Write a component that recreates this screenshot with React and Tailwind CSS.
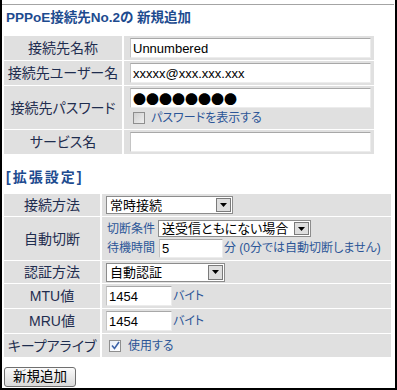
import React from 'react';

const FONT = "font-['Liberation_Sans','Noto_Sans_CJK_JP',sans-serif] [font-feature-settings:'palt']";

const TextBox = ({ value, w, h = 20, className = '' }) => (
  <div
    className={`flex items-center bg-white border border-t-[#a8a8a8] border-l-[#c4c4c4] border-r-[#ececec] border-b-[#ececec] pl-[2px] text-[13px] text-black leading-none ${className}`}
    style={{ width: w, height: h }}
  >
    {value}
  </div>
);

const SelectBox = ({ value, w, h = 18 }) => (
  <div
    className="flex items-stretch bg-white border border-[#8c8c8c] text-[13px] text-black leading-none"
    style={{ width: w, height: h }}
  >
    <div className="flex-1 flex items-center pl-[3px] whitespace-nowrap overflow-hidden">{value}</div>
    <div className="w-[15px] m-px flex items-center justify-center bg-[#dedede] border border-[#7a7a7a]">
      <svg width="7" height="4" viewBox="0 0 7 4">
        <path d="M0 0h7L3.5 4z" fill="#000" />
      </svg>
    </div>
  </div>
);

const CheckBox = ({ checked }) => (
  <span
    className={`w-[12px] h-[12px] border border-[#8e8e8e] flex items-center justify-center ${
      checked ? 'bg-gradient-to-br from-[#e8eef8] to-[#ffffff]' : 'bg-gradient-to-br from-[#d0d0d0] to-[#eeeeee]'
    }`}
  >
    {checked && (
      <svg width="9" height="9" viewBox="0 0 9 9">
        <path d="M1 4.5l2.5 3L8 1" stroke="#3d63a8" strokeWidth="1.6" fill="none" />
      </svg>
    )}
  </span>
);

const Label = ({ children, h }) => (
  <td className="bg-[#e0e0e0] text-center align-middle p-0 text-[14px] text-[#1f2d4f] leading-none" style={{ height: h }}>
    {children}
  </td>
);

export default function App() {
  return (
    <div className={`w-[397px] h-[390px] bg-white border-l-2 border-r-2 border-b-2 border-black overflow-hidden ${FONT}`}>
      <div className="mt-[4px] h-px bg-[#a4a4a4] mr-[1px]" />

      {/* Title */}
      <div className="h-[30px] pl-[4px] leading-[26px] text-[13.5px] font-bold text-[#1d4b8f]">
        PPPoE接続先No.2の 新規追加
      </div>

      {/* Basic settings */}
      <table className="w-[374px] border-separate border-spacing-x-[2px] border-spacing-y-px">
        <tbody>
          <tr>
            <Label h={24}>接続先名称</Label>
            <td className="bg-[#e0e0e0] p-0 pl-[6px] w-[250px]">
              <TextBox value="Unnumbered" w={241} className="text-[12.5px]" />
            </td>
          </tr>
          <tr>
            <Label h={24}>接続先ユーザー名</Label>
            <td className="bg-[#e0e0e0] p-0 pl-[6px]">
              <TextBox value="xxxxx@xxx.xxx.xxx" w={241} className="text-[12.5px]" />
            </td>
          </tr>
          <tr>
            <Label h={43}>接続先パスワード</Label>
            <td className="bg-[#e0e0e0] p-0 pl-[6px] align-top">
              <div className="pt-[2px]">
                <TextBox
                  value={<span className="font-['Noto_Sans_CJK_JP',sans-serif] text-[13px]">●●●●●●●●</span>}
                  w={241}
                />
              </div>
              <div className="flex items-center gap-[6px] pl-[3px] mt-[4px]">
                <CheckBox />
                <span className="text-[12px] text-[#2b5597] leading-none">パスワードを表示する</span>
              </div>
            </td>
          </tr>
          <tr>
            <Label h={24}>サービス名</Label>
            <td className="bg-[#e0e0e0] p-0 pl-[6px]">
              <TextBox value="" w={241} />
            </td>
          </tr>
        </tbody>
      </table>

      {/* Extended settings */}
      <div className="h-[38px] pt-[6px] pl-[4px] flex items-center text-[14px] tracking-[2px] font-bold text-[#1d4b8f]">
        [拡張設定]
      </div>

      <table className="w-[391px] border-separate border-spacing-x-[2px] border-spacing-y-px">
        <tbody>
          <tr>
            <Label h={22}>接続方法</Label>
            <td className="bg-[#e0e0e0] p-0 pl-[4px] w-[289px]">
              <SelectBox value="常時接続" w={127} />
            </td>
          </tr>
          <tr>
            <Label h={43}>自動切断</Label>
            <td className="bg-[#e0e0e0] p-0 pl-[5px]">
              <div className="flex items-center h-[19px] pt-[1px]">
                <span className="w-[51px] text-[12px] text-[#2b5597] leading-none">切断条件</span>
                <SelectBox value="送受信ともにない場合" w={153} h={17} />
              </div>
              <div className="flex items-center h-[21px]">
                <span className="w-[52px] text-[12px] text-[#2b5597] leading-none">待機時間</span>
                <TextBox value="5" w={64} h={19} />
                <span className="ml-px text-[12px] text-[#2b5597] leading-none whitespace-nowrap">
                  分 (0分では自動切断しません)
                </span>
              </div>
            </td>
          </tr>
          <tr>
            <Label h={22}>認証方法</Label>
            <td className="bg-[#e0e0e0] p-0 pl-[4px]">
              <SelectBox value="自動認証" w={119} h={19} />
            </td>
          </tr>
          <tr>
            <Label h={24}>MTU値</Label>
            <td className="bg-[#e0e0e0] p-0 pl-[4px]">
              <div className="flex items-center">
                <TextBox value="1454" w={66} />
                <span className="ml-px text-[12px] text-[#2b5597] leading-none">バイト</span>
              </div>
            </td>
          </tr>
          <tr>
            <Label h={24}>MRU値</Label>
            <td className="bg-[#e0e0e0] p-0 pl-[4px]">
              <div className="flex items-center">
                <TextBox value="1454" w={66} />
                <span className="ml-px text-[12px] text-[#2b5597] leading-none">バイト</span>
              </div>
            </td>
          </tr>
          <tr>
            <Label h={23}>キープアライブ</Label>
            <td className="bg-[#e0e0e0] p-0 pl-[7px]">
              <div className="flex items-center gap-[7px]">
                <CheckBox checked />
                <span className="text-[12px] text-[#2b5597] leading-none">使用する</span>
              </div>
            </td>
          </tr>
        </tbody>
      </table>

      <button className="block mt-[9px] ml-[2px] w-[72px] h-[20px] rounded-[3px] border border-[#6f6f6f] bg-gradient-to-b from-[#fbfbfb] to-[#d9d9d9] text-[13.5px] text-black leading-none">
        新規追加
      </button>
    </div>
  );
}
